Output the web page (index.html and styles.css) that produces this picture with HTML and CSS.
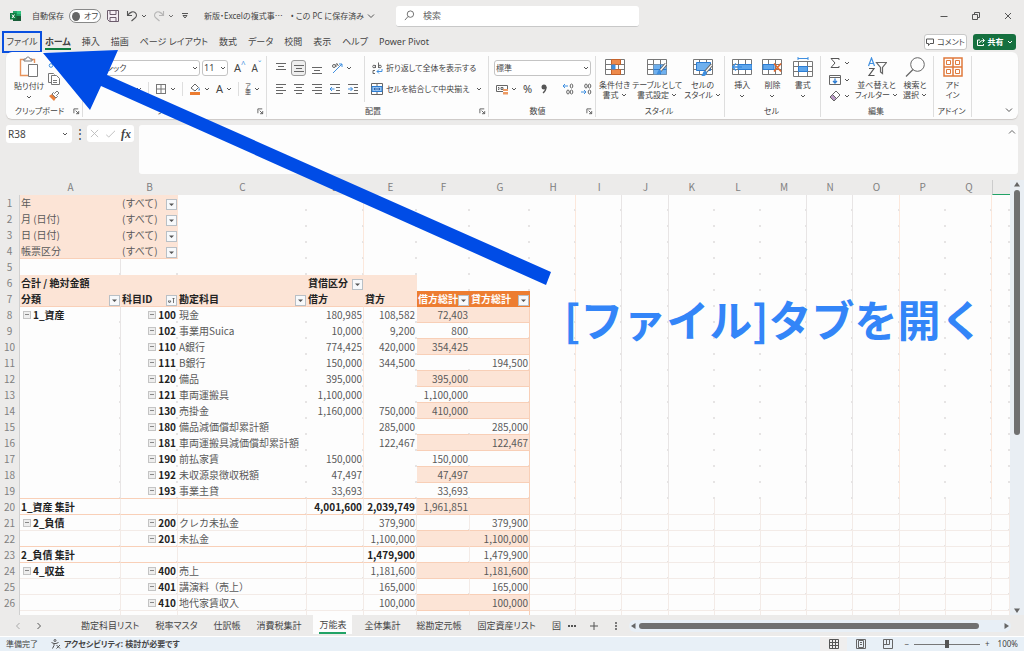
FILE: index.html
```html
<!DOCTYPE html>
<html lang="ja">
<head>
    <meta charset="UTF-8">
    <meta name="viewport" content="width=device-width, initial-scale=1.0">
    <title>新版・Excelの複式事</title>
    <link rel="stylesheet" href="styles.css">
</head>
<body>

    <svg class="sprite" aria-hidden="true">
        <symbol id="chev" viewBox="0 0 6 6"><path d="M1 2l2 2 2-2" fill="none" stroke="#555" stroke-width="1"/></symbol>
        <symbol id="launch" viewBox="0 0 8 8"><path d="M1 6V1h5M3 3l3.500 3.500M6.500 3.500v3h-3" fill="none" stroke="#555"/></symbol>
        <symbol id="al-left" viewBox="0 0 12 12"><path d="M1 1.500h10M1 4.500h7M1 7.500h10M1 10.500h7" stroke="#666"/></symbol>
        <symbol id="al-center" viewBox="0 0 12 12"><path d="M1 1.500h10M3 4.500h6M1 7.500h10M3 10.500h6" stroke="#666"/></symbol>
        <symbol id="al-right" viewBox="0 0 12 12"><path d="M1 1.500h10M4 4.500h7M1 7.500h10M4 10.500h7" stroke="#666"/></symbol>
        <symbol id="v-top" viewBox="0 0 12 12"><path d="M1 1.500h10M3 4.500h6M1 7.500h10" stroke="#666"/></symbol>
        <symbol id="v-mid" viewBox="0 0 12 12"><path d="M1 3.500h10M3 6.500h6M1 9.500h10" stroke="#666"/></symbol>
        <symbol id="v-bot" viewBox="0 0 12 12"><path d="M1 5.500h10M3 8.500h6M1 11.500h10" stroke="#666"/></symbol>
        <symbol id="grid" viewBox="0 0 20 20"><path d="M.5 2.500h19v15H.5zM.5 7.500h19M.5 12.500h19M6.500 2.500v15M13.500 2.500v15" fill="#fff" stroke="#777"/></symbol>
        <symbol id="brush" viewBox="0 0 12 12"><path d="M11 1L5 8" stroke="#666" stroke-width="3"/><path d="M11 1L5 8" stroke="#fff" stroke-width="1.300"/><path d="M1 11.500c2-1 1-4 3.500-4.500 2 0 2.500 2 1 3.500-1 1-3 1.300-4.500 1z" fill="#3f8fe0"/></symbol>
    </svg>

    <header class="titlebar">
        <div class="title-left">
            <svg class="logo" viewBox="0 0 12 12"><path d="M3 1h8v10H3z" fill="#21a366"/><path d="M7 1h4v3H7z" fill="#33c481"/><path d="M3 6h8v5H3z" fill="#185c37"/><path d="M0 3h6.500v6.500H0z" fill="#107c41"/><path d="M2 4.500l2.500 3.500M4.500 4.500L2 8" stroke="#fff"/></svg>
            <span class="autosave">自動保存</span>
            <button class="toggle" type="button" aria-label="自動保存"><i></i>オフ</button>
            <button class="ic save" type="button" aria-label="上書き保存"><svg viewBox="0 0 12 12"><path d="M.5 .5h11v11h-9l-2-2z" fill="#f4edf4" stroke="#6b5b6b"/><path d="M3 .5h6v4H3zM3 11.500v-4h6v4" fill="none" stroke="#6b5b6b"/></svg></button>
            <button class="ic undo" type="button" aria-label="元に戻す"><svg viewBox="0 0 12 12"><path d="M1.500 1v4.500H6M1.500 5.500C4 2 7 1 9 2.500s2 4 0 5.500L5.500 11" fill="none" stroke="#555" stroke-width="1.100"/></svg><svg class="chev"><use href="#chev"/></svg></button>
            <button class="ic redo" type="button" aria-label="やり直し"><svg viewBox="0 0 12 12"><path d="M10.500 1v4.500H6M10.500 5.500C8 2 5 1 3 2.500s-2 4 0 5.500L6.500 11" fill="none" stroke="#aaa" stroke-width="1.100"/></svg><svg class="chev"><use href="#chev"/></svg></button>
            <button class="ic more" type="button" aria-label="カスタマイズ"><svg class="chev" viewBox="0 0 6 6"><path d="M0 .5h6M1 2.500h4L3 5z" fill="none" stroke="#555"/></svg></button>
            <span class="doc">新版・Excelの複式事⋯</span>
            <span class="doc-state">• この PC に保存済み</span>
            <svg class="chev8" viewBox="0 0 8 8"><path d="M1 2.500l3 3 3-3" fill="none" stroke="#555"/></svg>
        </div>
        <label class="search">
            <svg viewBox="0 0 12 12"><circle cx="7" cy="4.500" r="3.500" fill="none" stroke="#666"/><path d="M4.500 7L1 11" stroke="#666"/></svg>
            <input type="text" placeholder="検索" aria-label="検索">
        </label>
        <div class="win">
            <button type="button" aria-label="最小化"><svg viewBox="0 0 10 10"><path d="M1.500 5.500h7" stroke="#555"/></svg></button>
            <button type="button" aria-label="元のサイズ"><svg viewBox="0 0 10 10"><path d="M1.500 3.500h5v5h-5zM3.500 3V1.500h5v5H7" fill="none" stroke="#555"/></svg></button>
            <button type="button" aria-label="閉じる"><svg viewBox="0 0 10 10"><path d="M2 2l6 6M8 2L2 8" stroke="#555"/></svg></button>
        </div>
    </header>

    <nav class="tabs">
        <button class="file" type="button">ファイル</button>
        <button class="active" type="button">ホーム</button>
        <button type="button">挿入</button>
        <button type="button">描画</button>
        <button type="button">ページ レイアウト</button>
        <button type="button">数式</button>
        <button type="button">データ</button>
        <button type="button">校閲</button>
        <button type="button">表示</button>
        <button type="button">ヘルプ</button>
        <button type="button">Power Pivot</button>
        <div class="tab-actions">
            <button class="comment" type="button"><svg viewBox="0 0 8 8"><path d="M.5 1h7v4.500H4L2.500 7.500V5.500h-2z" fill="none" stroke="#555"/></svg>コメント</button>
            <button class="share" type="button"><svg viewBox="0 0 8 8"><path d="M3 2H.5v5.500h6V6M2.500 5c.5-2 2-2.500 4.500-2.500M5.500 .5l2 2-2 2" fill="none" stroke="#fff"/></svg>共有<svg class="chev" viewBox="0 0 6 6"><path d="M1 2l2 2 2-2" fill="none" stroke="#fff"/></svg></button>
        </div>
    </nav>

    <section class="ribbon">
        <div class="group">
            <div class="body clip">
                <button class="big" type="button"><svg class="i22" viewBox="0 0 22 22"><path d="M6 3.500H2.500v16H10M13 3.500h3.500V7" fill="none" stroke="#e8935a" stroke-width="1.400"/><path d="M6 5V3h2c0-2.600 4-2.600 4 0h2v2z" fill="#fff" stroke="#777"/><path d="M10.500 8.500h9v12h-9z" fill="#fff" stroke="#777"/></svg><span>貼り付け</span><svg class="chev"><use href="#chev"/></svg></button>
                <div class="stack">
                    <button class="ic" type="button" aria-label="切り取り"><svg viewBox="0 0 12 12"><path d="M4 8L9 0M8 8L3 0" stroke="#777"/><circle cx="3" cy="9.500" r="1.800" fill="none" stroke="#3f8fe0"/><circle cx="9" cy="9.500" r="1.800" fill="none" stroke="#3f8fe0"/></svg></button>
                    <button class="ic" type="button" aria-label="コピー"><svg viewBox="0 0 12 12"><path d="M3 9.500H.5v-9h5l1 1" fill="none" stroke="#777"/><path d="M3.500 2.500h5l3 3v6h-8z" fill="#fff" stroke="#777"/><path d="M5 7.500h4M5 9.500h4" stroke="#777"/></svg></button>
                    <button class="ic" type="button" aria-label="書式のコピー"><svg viewBox="0 0 12 12"><path d="M1 6l5 5 2-3-4-4z" fill="#e8803c"/><path d="M4 4l4 4 1.500-1.500-1-1L11 3 9 1 6.500 3.500l-1-1z" fill="#fff" stroke="#777"/></svg></button>
                </div>
            </div>
            <div class="label"><span>クリップボード</span><svg><use href="#launch"/></svg></div>
        </div>

        <div class="group">
            <div class="body rows">
                <div class="row">
                    <select class="font-name" aria-label="フォント"><option>游ゴシック</option></select>
                    <select class="font-size" aria-label="フォント サイズ"><option>11</option></select>
                    <button class="letter" type="button">A<sup>^</sup></button>
                    <button class="letter small" type="button">A<sup>ˇ</sup></button>
                </div>
                <div class="row end">
                    <svg class="chev"><use href="#chev"/></svg>
                    <i class="sep"></i>
                    <button class="ic" type="button" aria-label="罫線"><svg viewBox="0 0 12 12"><path d="M1 1.500h10M1 10.500h10M1.500 1v10M10.500 1v10M6 1v10M1 6h10" stroke="#777"/></svg><svg class="chev"><use href="#chev"/></svg></button>
                    <i class="sep"></i>
                    <button class="ic" type="button" aria-label="塗りつぶしの色"><svg viewBox="0 0 12 12"><path d="M2 5l4-4 3.500 3.500L6 8z" fill="#fff" stroke="#666"/><path d="M10 4l1 3-1.500 1z" fill="#3f8fe0"/><path d="M1 9h10v3H1z" fill="#ed7d31"/></svg><svg class="chev"><use href="#chev"/></svg></button>
                    <button class="ic letter" type="button">A<svg class="chev"><use href="#chev"/></svg></button>
                    <i class="sep"></i>
                    <button class="ic ruby" type="button"><span>ア<br>亜</span><svg class="chev"><use href="#chev"/></svg></button>
                </div>
            </div>
            <div class="label"><span>フォント</span><svg><use href="#launch"/></svg></div>
        </div>

        <div class="group">
            <div class="body align">
                <div class="rows">
                    <div class="row">
                        <button class="ic" type="button" aria-label="上揃え"><svg><use href="#v-top"/></svg></button>
                        <button class="ic on" type="button" aria-label="上下中央揃え"><svg><use href="#v-mid"/></svg></button>
                        <button class="ic" type="button" aria-label="下揃え"><svg><use href="#v-bot"/></svg></button>
                        <button class="ic wide" type="button" aria-label="方向"><svg viewBox="0 0 12 12"><path d="M2 11L11 2M11 5V2H8" fill="none" stroke="#3f8fe0"/><circle cx="3" cy="4" r="1.500" fill="none" stroke="#666"/><path d="M5 2v3M5.500 1l2 3" stroke="#666"/></svg><svg class="chev"><use href="#chev"/></svg></button>
                    </div>
                    <div class="row">
                        <button class="ic" type="button" aria-label="左揃え"><svg><use href="#al-left"/></svg></button>
                        <button class="ic" type="button" aria-label="中央揃え"><svg><use href="#al-center"/></svg></button>
                        <button class="ic" type="button" aria-label="右揃え"><svg><use href="#al-right"/></svg></button>
                        <button class="ic" type="button" aria-label="インデントを減らす"><svg viewBox="0 0 12 12"><path d="M1 1.500h10M7 4.500h4M7 7.500h4M1 10.500h10" stroke="#666"/><path d="M5.500 6H1M3 4L1 6l2 2" fill="none" stroke="#3f8fe0"/></svg></button>
                        <button class="ic" type="button" aria-label="インデントを増やす"><svg viewBox="0 0 12 12"><path d="M1 1.500h10M7 4.500h4M7 7.500h4M1 10.500h10" stroke="#666"/><path d="M1 6h4.500M3.500 4l2 2-2 2" fill="none" stroke="#3f8fe0"/></svg></button>
                    </div>
                </div>
                <div class="rows wrap">
                    <button class="row" type="button"><svg class="i12" viewBox="0 0 12 12"><path d="M4.500 3v3M7.500 .5v5.500M4 8.500H2v3h2" fill="none" stroke="#666"/><circle cx="3" cy="4.500" r="1.300" fill="none" stroke="#666"/><circle cx="9" cy="4.500" r="1.300" fill="none" stroke="#666"/><path d="M11 7v2.500H6M8 7.500l-2 2 2 2" fill="none" stroke="#3f8fe0"/></svg>折り返して全体を表示する</button>
                    <button class="row" type="button"><svg class="i12" viewBox="0 0 12 12"><path d="M.5 .5h11v11H.5zM6 .5v3M6 8.500v3" fill="#fff" stroke="#666"/><path d="M1 3.500h10v5H1z" fill="#9cc8f3" stroke="#2b7cd3"/><path d="M3 6h6M4 4.800L3 6l1 1.200M8 4.800L9 6 8 7.200" fill="none" stroke="#2b5fa8"/></svg>セルを結合して中央揃え<svg class="chev"><use href="#chev"/></svg></button>
                </div>
            </div>
            <div class="label"><span>配置</span><svg><use href="#launch"/></svg></div>
        </div>

        <div class="group">
            <div class="body rows num">
                <select aria-label="表示形式"><option>標準</option></select>
                <div class="row spread">
                    <button class="ic" type="button" aria-label="通貨"><svg viewBox="0 0 12 12"><path d="M.5 2.500h11v6H.5z" fill="#fff" stroke="#666"/><path d="M2 4.500h1v2H2M5 4.500h2v2H5z" fill="none" stroke="#666"/><path d="M7 6h5v5.500H7z" fill="#ed9a63"/><path d="M7 8.500h5" stroke="#fff"/></svg><svg class="chev"><use href="#chev"/></svg></button>
                    <button class="ic pct" type="button">%</button>
                    <button class="ic" type="button" aria-label="桁区切り"><svg viewBox="0 0 12 12"><circle cx="6" cy="4" r="2.500" fill="#555"/><path d="M8 4c0 3-1 4.500-3 6" fill="none" stroke="#555" stroke-width="1.300"/></svg></button>
                    <i class="sep"></i>
                    <button class="ic" type="button" aria-label="小数点以下の桁数を増やす"><svg viewBox="0 0 12 12"><path d="M6 3H1M3 1L1 3l2 2" fill="none" stroke="#3f8fe0"/><ellipse cx="9.500" cy="3" rx="1.300" ry="2" fill="none" stroke="#666"/><ellipse cx="6" cy="9" rx="1.300" ry="2" fill="none" stroke="#666"/><ellipse cx="9.500" cy="9" rx="1.300" ry="2" fill="none" stroke="#666"/></svg></button>
                    <button class="ic" type="button" aria-label="小数点以下の桁数を減らす"><svg viewBox="0 0 12 12"><path d="M1 9h5M4 7l2 2-2 2" fill="none" stroke="#3f8fe0"/><ellipse cx="9.500" cy="3" rx="1.300" ry="2" fill="none" stroke="#666"/><ellipse cx="6" cy="3" rx="1.300" ry="2" fill="none" stroke="#666"/><ellipse cx="9.500" cy="9" rx="1.300" ry="2" fill="none" stroke="#666"/></svg></button>
                </div>
            </div>
            <div class="label"><span>数値</span><svg><use href="#launch"/></svg></div>
        </div>

        <div class="group">
            <div class="body bigs">
                <button class="big" type="button"><svg class="i20" viewBox="0 0 20 20"><use href="#grid"/><path d="M6.500 2.500h9v5h-9zM6.500 12.500h9v5h-9z" fill="#ed8a4c" stroke="#c5622a"/><path d="M6.500 7.500h4v5h-4z" fill="#3f8fe0"/></svg><span>条件付き<br>書式<svg class="chev"><use href="#chev"/></svg></span></button>
                <button class="big" type="button"><svg class="i20" viewBox="0 0 20 20"><use href="#grid"/><path d="M6.500 7.500h13v10h-13z" fill="#6fb0ee"/><path d="M6.500 12.500h13M13.500 7.500v10" stroke="#2b7cd3"/><use href="#brush" x="8" y="5" width="12" height="14"/></svg><span>テーブルとして<br>書式設定<svg class="chev"><use href="#chev"/></svg></span></button>
                <button class="big" type="button"><svg class="i20" viewBox="0 0 20 20"><use href="#grid"/><path d="M3.500 5.500h14v8h-14z" fill="#6fb0ee" stroke="#2b7cd3"/><use href="#brush" x="7" y="6" width="13" height="14"/></svg><span>セルの<br>スタイル<svg class="chev"><use href="#chev"/></svg></span></button>
            </div>
            <div class="label"><span>スタイル</span></div>
        </div>

        <div class="group">
            <div class="body bigs">
                <button class="big" type="button"><svg class="i20" viewBox="0 0 20 20"><use href="#grid"/><path d="M6 7.500h14v5H6z" fill="#5ea6ec" stroke="#2b7cd3"/><path d="M10 10H1M4 6.500L.5 10 4 13.500" fill="none" stroke="#3f8fe0" stroke-width="1.300"/></svg><span>挿入</span><svg class="chev"><use href="#chev"/></svg></button>
                <button class="big" type="button"><svg class="i20" viewBox="0 0 20 20"><use href="#grid"/><path d="M1 7.500h11v5H1z" fill="#5ea6ec" stroke="#2b7cd3"/><path d="M12 6.500l7 8M19 6.500l-7 8" stroke="#e0672a" stroke-width="1.500"/></svg><span>削除</span><svg class="chev"><use href="#chev"/></svg></button>
                <button class="big" type="button"><svg class="i20" viewBox="0 0 20 20"><path d="M.5 4.500h19v15H.5zM.5 9.500h19M.5 14.500h19M5.500 4.500v15M14.500 4.500v15" fill="#fff" stroke="#777"/><path d="M5.500 9.500h9v5h-9z" fill="#5ea6ec" stroke="#2b7cd3"/><path d="M5 1.500h10M5 0v3M15 0v3" stroke="#3f8fe0"/></svg><span>書式</span><svg class="chev"><use href="#chev"/></svg></button>
            </div>
            <div class="label"><span>セル</span></div>
        </div>

        <div class="group">
            <div class="body edit">
                <div class="stack">
                    <button class="ic" type="button" aria-label="合計"><svg viewBox="0 0 12 12"><path d="M10 3V1.500H2L6 6l-4 4.500h8V9" fill="none" stroke="#555"/></svg><svg class="chev"><use href="#chev"/></svg></button>
                    <button class="ic" type="button" aria-label="フィル"><svg viewBox="0 0 12 12"><path d="M.5 1.500h11v9H.5zM.5 3.500h11" fill="none" stroke="#666"/><path d="M6 4.500v4.500M4 7l2 2 2-2" fill="none" stroke="#2b7cd3" stroke-width="1.300"/></svg><svg class="chev"><use href="#chev"/></svg></button>
                    <button class="ic" type="button" aria-label="クリア"><svg viewBox="0 0 12 12"><path d="M1 7l6-6 4 4-6 6z" fill="#fff" stroke="#666"/><path d="M1 7l2.500-2.500 4 4L5 11z" fill="#b99ac4" stroke="#666"/></svg><svg class="chev"><use href="#chev"/></svg></button>
                </div>
                <button class="big" type="button"><svg class="i20" viewBox="0 0 20 20"><path d="M1.500 9L4.500 1l3 8M2.500 6.500h4" fill="none" stroke="#3f8fe0" stroke-width="1.200"/><path d="M2 11.500h5L2 18.500h5.500" fill="none" stroke="#555" stroke-width="1.200"/><path d="M9.500 5.500h10l-4 5v6l-2-1.500v-4.500z" fill="none" stroke="#666" stroke-width="1.200"/></svg><span>並べ替えと<br>フィルター<svg class="chev"><use href="#chev"/></svg></span></button>
                <button class="big" type="button"><svg class="i20" viewBox="0 0 20 20"><circle cx="12.500" cy="7.500" r="6.800" fill="none" stroke="#666"/><path d="M8 12.500L1 19.500" stroke="#666" stroke-width="1.200"/></svg><span>検索と<br>選択<svg class="chev"><use href="#chev"/></svg></span></button>
            </div>
            <div class="label"><span>編集</span></div>
        </div>

        <div class="group">
            <div class="body bigs">
                <button class="big" type="button"><svg class="i20" viewBox="0 0 20 20"><path d="M1 1h18v18H1zM10 1v18M1 10h18" fill="none" stroke="#e07a3c" stroke-width="1.500"/><path d="M3.500 3.500h4v4h-4zM12.500 3.500h4v4h-4zM3.500 12.500h4v4h-4zM12.500 12.500h4v4h-4z" fill="#fff" stroke="#e07a3c"/></svg><span>アド<br>イン</span></button>
            </div>
            <div class="label"><span>アドイン</span></div>
        </div>
        <button class="collapse" type="button" aria-label="リボンを折りたたむ"><svg class="chev8" viewBox="0 0 8 8"><path d="M1 2.500l3 3 3-3" fill="none" stroke="#555"/></svg></button>
    </section>

    <section class="formula">
        <select class="name-box" aria-label="名前ボックス"><option>R38</option></select>
        <span class="dots">⋮</span>
        <div class="fx">
            <svg viewBox="0 0 10 10"><path d="M1 1l8 8M9 1L1 9" stroke="#bbb"/></svg>
            <svg viewBox="0 0 10 10"><path d="M0 6l3 3 7-7" fill="none" stroke="#bbb"/></svg>
            <span>fx</span>
        </div>
        <div class="formula-box">
            <textarea aria-label="数式バー"></textarea>
            <svg class="chev8" viewBox="0 0 8 8"><path d="M1 5.500l3-3 3 3" fill="none" stroke="#666"/></svg>
        </div>
    </section>

    <main class="sheet">
        <div class="grid-area">
            <table class="cells">
                <colgroup>
                    <col class="c-no"><col class="c-a"><col class="c-b"><col class="c-c"><col class="c-d"><col class="c-e"><col class="c-f"><col class="c-g">
                    <col><col><col><col><col><col><col><col><col><col><col class="c-r">
                </colgroup>
                <thead><tr id="letters"></tr></thead>
                <tbody id="rows"></tbody>
            </table>
        </div>
        <div class="vscroll">
            <svg viewBox="0 0 8 8"><path d="M1 6.500L4 2l3 4.500z" fill="#666"/></svg>
            <div class="vtrack"><i></i></div>
            <svg viewBox="0 0 8 8"><path d="M1 1.500L4 6l3-4.500z" fill="#666"/></svg>
        </div>
    </main>

    <nav class="sheets">
        <button class="arrow" type="button" aria-label="前へ"><svg class="chev8" viewBox="0 0 8 8"><path d="M5.500 1l-3 3 3 3" fill="none" stroke="#aaa"/></svg></button>
        <button class="arrow" type="button" aria-label="次へ"><svg class="chev8" viewBox="0 0 8 8"><path d="M2.500 1l3 3-3 3" fill="none" stroke="#555"/></svg></button>
        <div class="names">
            <button type="button">勘定科目リスト</button>
            <button type="button">税率マスタ</button>
            <button type="button">仕訳帳</button>
            <button type="button">消費税集計</button>
            <button class="active" type="button"><span>万能表</span></button>
            <button type="button">全体集計</button>
            <button type="button">総勘定元帳</button>
            <button type="button">固定資産リスト</button>
            <button class="next" type="button">固</button>
        </div>
        <button class="tool" type="button" aria-label="その他のシート"><svg class="chev8" viewBox="0 0 8 8"><path d="M0 4h2M3 4h2M6 4h2" stroke="#555" stroke-width="2"/></svg></button>
        <button class="tool" type="button" aria-label="新しいシート"><svg class="chev8" viewBox="0 0 8 8"><path d="M4 0v8M0 4h8" stroke="#555"/></svg></button>
        <button class="tool" type="button" aria-label="幅の調整"><svg class="chev8" viewBox="0 0 8 8"><path d="M4 0v2M4 3v2M4 6v2" stroke="#555" stroke-width="1.500"/></svg></button>
        <div class="hscroll">
            <svg viewBox="0 0 8 8"><path d="M6.500 1L2 4l4.500 3z" fill="#666"/></svg>
            <div class="htrack"><i></i></div>
            <svg viewBox="0 0 8 8"><path d="M1.500 1L6 4 1.500 7z" fill="#666"/></svg>
        </div>
    </nav>

    <footer class="status">
        <span>準備完了</span>
        <svg class="acc" viewBox="0 0 10 10"><circle cx="4" cy="1.500" r="1" fill="none" stroke="#555"/><path d="M.5 3.500L3 4.500v2L1.500 9.500M7.500 3.500L5 4.500M3 4.500h2M5.500 6l3.500 3.500M9 6L5.500 9.500" fill="none" stroke="#555"/></svg>
        <b>アクセシビリティ: 検討が必要です</b>
        <div class="views">
            <button class="on" type="button" aria-label="標準"><svg viewBox="0 0 10 10"><path d="M.5 .5h9v9h-9zM.5 3.500h9M.5 6.500h9M3.500 .5v9M6.500 .5v9" fill="none" stroke="#555"/></svg></button>
            <button type="button" aria-label="ページ レイアウト"><svg viewBox="0 0 10 10"><path d="M.5 .5h9v9h-9zM2.500 1.500h5v7h-5zM4 3.500h2M4 5.500h2" fill="none" stroke="#666"/></svg></button>
            <button type="button" aria-label="改ページ プレビュー"><svg viewBox="0 0 10 10"><path d="M.5 .5h9v9h-9zM3.500 1v4.500h3V1M1 5.500h3" fill="none" stroke="#666"/></svg></button>
        </div>
        <div class="zoom">
            <span>−</span>
            <input type="range" min="0" max="100" value="50" aria-label="ズーム">
            <span>+</span>
            <output>100%</output>
        </div>
    </footer>

    <svg class="pointer" viewBox="0 0 560 290" width="560" height="290" aria-hidden="true">
        <path d="M43 53L118 50l-11 25 444 197-5 13L101 86l-11 24z" fill="#004ce6"/>
    </svg>
    <p class="callout">[ファイル]タブを開く</p>

    <script src="script.js"></script>
</body>
</html>
```

FILE: styles.css
```css
* {
    box-sizing: border-box;
}

body {
    display: flex;
    flex-direction: column;
    position: relative;
    height: 100vh;
    margin: 0;
    overflow: hidden;
    background-color: #ecebea;
    color: #444;
    font-family: "Noto Sans", "Noto Sans CJK JP", sans-serif;
    font-size: 8px;
    line-height: 10px;
    font-feature-settings: "palt";
}

button {
    padding: 0;
    border: none;
    background: none;
    color: inherit;
    font: inherit;
    font-feature-settings: inherit;
}

svg {
    flex: none;
    display: block;
}

.sprite {
    position: absolute;
    width: 0;
    height: 0;
}

.chev {
    width: 6px;
    height: 6px;
}

.chev8 {
    width: 8px;
    height: 8px;
}

select {
    appearance: none;
    border: 1px solid #c4c4c4;
    border-radius: 3px;
    background: #fff url("data:image/svg+xml,%3Csvg xmlns='http://www.w3.org/2000/svg' width='6' height='6'%3E%3Cpath d='M1 2l2 2 2-2' fill='none' stroke='%23555'/%3E%3C/svg%3E") no-repeat right 1px center;
    color: #444;
    font: inherit;
    padding: 0 1px;
    height: 16px;
}

/* title bar */
.titlebar {
    display: grid;
    grid-template-columns: 386fr 243fr 385fr;
    align-items: center;
    height: 32px;
    padding-left: 10px;
    flex: none;
}

.title-left {
    display: flex;
    align-items: center;
    white-space: nowrap;
}

.logo {
    width: 12px;
    height: 12px;
}

.autosave {
    margin: 0 5px 0 10px;
}

.toggle {
    display: flex;
    align-items: center;
    gap: 4px;
    width: 32px;
    height: 14px;
    padding: 0 2px;
    border: 1px solid #888;
    border-radius: 7px;
    background-color: #fff;
}

.toggle i {
    width: 9px;
    height: 9px;
    border-radius: 50%;
    background-color: #666;
}

.ic {
    display: flex;
    align-items: center;
    justify-content: center;
    gap: 3px;
}

.ic svg:not(.chev) {
    width: 12px;
    height: 12px;
}

.save {
    margin: 0 7px 0 6px;
}

.redo {
    margin-left: 6px;
    opacity: .8;
}

.more {
    margin: 0 16px 0 8px;
}

.more .chev {
    width: 6px;
    height: 6px;
}

.doc-state {
    margin: 0 3px 0 8px;
}

.search {
    display: flex;
    align-items: center;
    gap: 8px;
    height: 21px;
    padding: 0 8px;
    border-radius: 3px;
    border-bottom: 1px solid #c8c8c8;
    background-color: #fff;
}

.search svg {
    width: 11px;
    height: 11px;
}

.search input {
    flex: 1;
    border: none;
    padding: 0;
    font: inherit;
    font-size: 9px;
    outline: none;
}

.search input::placeholder {
    color: #666;
}

.win {
    display: flex;
    justify-content: flex-end;
    gap: 22px;
    padding-right: 11px;
}

.win svg {
    width: 10px;
    height: 10px;
}

/* ribbon tabs */
.tabs {
    display: flex;
    align-items: center;
    gap: 11px;
    height: 20px;
    padding: 0 8px 0 2px;
    flex: none;
    font-size: 9px;
    white-space: nowrap;
}

.tabs > button {
    height: 16px;
    padding-top: 2px;
    border-bottom: 2px solid transparent;
}

.tabs .file {
    width: 40px;
    height: 22px;
    margin-right: -8px;
    padding: 0;
    border: 2px solid #0a50e0;
}

.tabs .active {
    border-color: #107c41;
    font-weight: bold;
}

.tab-actions {
    display: flex;
    gap: 6px;
    margin-left: auto;
    font-size: 8px;
}

.tab-actions button {
    display: flex;
    align-items: center;
    justify-content: center;
    gap: 3px;
    width: 43px;
    height: 16px;
    border-radius: 3px;
}

.tab-actions svg:not(.chev) {
    width: 8px;
    height: 8px;
}

.comment {
    border: 1px solid #c8c8c8;
    background-color: #fff;
}

.tab-actions .share {
    background-color: #15703f;
    color: #fff;
    font-weight: bold;
}

/* ribbon */
.ribbon {
    display: grid;
    grid-template-columns: 77fr 184fr 222fr 107fr 129fr 96fr 113fr 38fr 46fr;
    height: 67px;
    margin: 0 6px;
    flex: none;
    border-radius: 6px;
    background-color: #fdfdfd;
    box-shadow: 0 1px 1px #ccc8c6;
    white-space: nowrap;
}

.group {
    display: flex;
    flex-direction: column;
    justify-content: space-between;
    min-width: 0;
    margin: 4px 0 2px;
    border-right: 1px solid #dedede;
}

.body {
    display: flex;
    height: 46px;
}

.label {
    display: flex;
    align-items: center;
    height: 12px;
    padding-right: 2px;
}

.label span {
    flex: 1;
    text-align: center;
}

.label svg {
    width: 7px;
    height: 7px;
}

.rows {
    display: flex;
    flex-direction: column;
    gap: 5px;
    padding-top: 4px;
}

.row {
    display: flex;
    align-items: center;
    gap: 6px;
    height: 16px;
}

.row.end {
    justify-content: flex-end;
    gap: 6px;
    padding-right: 6px;
}

.row.spread {
    justify-content: space-between;
    padding: 0 2px;
}

.sep {
    width: 1px;
    height: 14px;
    background-color: #dedede;
}

.clip {
    justify-content: space-between;
    padding: 0 22px 0 8px;
}

.stack {
    display: flex;
    flex-direction: column;
    justify-content: space-between;
}

.body .big {
    display: flex;
    flex-direction: column;
    align-items: center;
    gap: 3px;
    line-height: 10px;
}

.big span svg {
    display: inline-block;
    margin-left: 2px;
}

.i22 {
    width: 22px;
    height: 22px;
}

.i20 {
    width: 20px;
    height: 20px;
}

.i12 {
    width: 12px;
    height: 12px;
}

.font-name {
    width: 112px;
    margin-left: 5px;
}

.row .font-size {
    width: 26px;
    margin-left: -4px;
    font-size: 9px;
}

.letter {
    font-size: 11px;
}

.letter.small {
    font-size: 10px;
}

.letter sup {
    color: #3f8fe0;
    font-size: 8px;
    line-height: 0;
}

.ruby {
    font-size: 6px;
    line-height: 6px;
}

.align {
    padding-left: 6px;
}

.align .ic {
    width: 15px;
    height: 16px;
}

.align .row {
    gap: 3px;
}

.align .on {
    border: 1px solid #999;
    border-radius: 3px;
    background-color: #eee;
}

.align .wide {
    width: 28px;
}

.align .wrap {
    margin-left: 4px;
    padding-left: 6px;
    border-left: 1px solid #dedede;
}

.wrap .chev {
    margin-left: 3px;
}

.num {
    padding: 4px 4px 0 5px;
}

.pct {
    font-size: 11px;
}

.bigs {
    justify-content: space-around;
    padding: 1px 2px 0;
}

.edit {
    justify-content: space-between;
    padding: 1px 6px 0 8px;
}

.collapse {
    align-self: end;
    justify-self: end;
    padding: 5px;
}

/* formula bar */
.formula {
    display: flex;
    align-items: flex-start;
    height: 61px;
    padding: 6px;
    flex: none;
}

.formula .name-box {
    width: 66px;
    height: 18px;
    padding: 0 2px;
    border: none;
    background-position: right 4px center;
    font-size: 10px;
}

.dots {
    width: 15px;
    line-height: 18px;
    font-size: 12px;
    text-align: center;
}

.fx {
    display: flex;
    align-items: center;
    justify-content: space-between;
    width: 47px;
    height: 17px;
    padding: 0 3px;
    border-radius: 3px;
    background-color: #fff;
}

.fx svg {
    width: 9px;
    height: 9px;
}

.fx span {
    font-family: "Liberation Serif", serif;
    font-size: 12px;
    font-style: italic;
    font-weight: bold;
}

.formula-box {
    display: flex;
    flex: 1;
    height: 49px;
    margin-left: 5px;
    padding: 3px 2px;
    border-radius: 3px;
    background-color: #fdfdfd;
}

.formula-box textarea {
    flex: 1;
    border: none;
    background: none;
    resize: none;
}

/* sheet */
.sheet {
    display: flex;
    flex: 1;
    min-height: 0;
}

.grid-area {
    flex: 1;
    min-width: 0;
    overflow: hidden;
    background-color: #fdfdfd;
}

.cells {
    width: 100%;
    table-layout: fixed;
    border-collapse: separate;
    border-spacing: 0;
    color: #595959;
    font-family: "Noto Sans CJK JP", sans-serif;
    font-size: 10px;
    line-height: 15px;
    font-feature-settings: normal;
    white-space: nowrap;
}

.c-no { width: 20px; }
.c-a { width: 101px; }
.c-b { width: 57px; }
.c-c { width: 129px; }
.c-d { width: 57px; }
.c-e { width: 53px; }
.c-f { width: 53px; }
.c-g { width: 60px; }
.c-r { width: 18px; }

.cells th {
    height: 15px;
    padding: 0;
    background-color: #ecebea;
    color: #808080;
    font-weight: normal;
    line-height: 14px;
    vertical-align: top;
}

.cells thead th:last-child {
    border-left: 1px solid #ccc;
    border-bottom: 1px solid #21a366;
}

.cells tbody th {
    height: 16px;
    border-right: 1px solid #d0d0d0;
    line-height: 15px;
}

.cells td {
    height: 16px;
    padding: 0 1px;
    border-right: 1px solid transparent;
    border-bottom: 1px solid transparent;
    background-image: linear-gradient(#e6e4e4, #e6e4e4);
    background-size: 2px 2px;
    background-repeat: no-repeat;
    background-position: right bottom;
    background-origin: border-box;
}

.cells .line {
    border-right-color: #e8e5e5;
}

.cells .warm {
    border-right-color: #fce8dc;
}

.cells .ruled td {
    border-bottom-color: #f3ebe7;
    border-right-color: #f3ebe7;
}

.cells td.peach {
    border-color: transparent;
    background-color: #fce4d6;
    background-image: none;
}

.cells tr td.edge {
    border-bottom-color: #f9d0b8;
}

.cells .head,
.cells .strong {
    color: #222;
    font-weight: bold;
}

.cells .orange {
    background-color: #ed7d31;
    background-image: none;
    color: #fff;
    font-weight: bold;
}

.cells td.band {
    border-right-color: transparent;
    background-color: #fce4d6;
    background-image: none;
}

.cells tr td.band,
.cells tr td.plain {
    border-bottom-color: #f8cfb7;
}

.cells tr td.last {
    border-right-color: #f8cfb7;
}

.cell {
    display: flex;
    align-items: center;
    justify-content: space-between;
    height: 15px;
}

.cell.right {
    justify-content: flex-end;
}

.cell.left {
    justify-content: flex-start;
}

.filter {
    display: flex;
    align-items: center;
    justify-content: center;
    flex: none;
    align-self: flex-end;
    width: 11px;
    height: 11px;
    margin-right: -1px;
    border: 1px solid #b9c0c6;
    background-color: #f7f9fb;
}

.filter svg {
    width: 7px;
    height: 7px;
}

.minus {
    flex: none;
    width: 8px;
    height: 8px;
    margin: 0 2px;
    border: 1px solid #c4c4c4;
    background: linear-gradient(#888, #888) center / 4px 1px no-repeat #eee;
}

.vscroll {
    display: flex;
    flex-direction: column;
    align-items: center;
    width: 14px;
    background-color: #e9eef3;
}

.vscroll svg,
.hscroll svg {
    width: 8px;
    height: 8px;
}

.vtrack {
    flex: 1;
    padding: 2px 0;
}

.vtrack i {
    display: block;
    width: 6px;
    height: 59%;
    border-radius: 3px;
    background-color: #707070;
}

/* sheet tabs */
.sheets {
    display: flex;
    align-items: center;
    height: 22px;
    flex: none;
    border-bottom: 1px solid #fff;
    font-size: 9px;
    white-space: nowrap;
}

.arrow {
    width: 21px;
}

.arrow:first-child {
    margin-left: 7px;
}

.arrow svg,
.tool svg {
    margin: auto;
}

.names {
    display: flex;
    align-self: stretch;
    align-items: center;
    margin-left: 24px;
}

.names button {
    padding: 0 8px;
}

.names .active {
    align-self: flex-start;
    height: 19px;
    margin: 0 4px;
    padding: 0 6px;
    background-color: #fdfdfd;
}

.active span {
    border-bottom: 2px solid #21a366;
    padding-bottom: 1px;
}

.names .next {
    padding-right: 0;
}

.tool {
    width: 22px;
}

.hscroll {
    display: flex;
    flex: 1;
    align-items: center;
    height: 12px;
    margin: 0 13px 0 2px;
    border-radius: 6px;
    background-color: #e8eff6;
}

.htrack {
    flex: 1;
    padding: 0 2px;
}

.htrack i {
    display: block;
    width: 94%;
    height: 6px;
    border-radius: 3px;
    background-color: #707070;
}

/* status bar */
.status {
    display: flex;
    align-items: center;
    height: 14px;
    padding: 0 6px;
    flex: none;
    background-color: #e8f0f7;
}

.acc {
    width: 10px;
    height: 10px;
    margin: 0 3px 0 13px;
}

.views {
    display: flex;
    margin-left: auto;
}

.views button {
    width: 27px;
    height: 14px;
}

.views .on {
    background-color: #efeeee;
}

.views svg {
    width: 10px;
    height: 10px;
    margin: auto;
}

.zoom {
    display: flex;
    align-items: center;
    gap: 5px;
    padding-left: 3px;
}

.zoom output {
    margin-left: 3px;
}

.zoom input {
    appearance: none;
    width: 66px;
    height: 1px;
    margin: 0;
    background-color: #777;
}

.zoom input::-webkit-slider-thumb {
    appearance: none;
    width: 4px;
    height: 8px;
    background-color: #555;
}

/* tutorial overlay */
.pointer {
    position: absolute;
    left: 0;
    top: 0;
    pointer-events: none;
}

.callout {
    position: absolute;
    left: 564px;
    top: 288px;
    margin: 0;
    color: #3385f8;
    font-family: "Noto Sans CJK JP", sans-serif;
    font-size: 43px;
    font-weight: bold;
    line-height: 60px;
    font-feature-settings: normal;
    white-space: nowrap;
}
```

FILE: script.js
```js
const letters = ['', 'A', 'B', 'C', 'D', 'E', 'F', 'G', 'H', 'I', 'J', 'K', 'L', 'M', 'N', 'O', 'P', 'Q', ''];

// A, B, C, D, E, F, G
const data = [
    ['年', '(すべて)'],
    ['月 (日付)', '(すべて)'],
    ['日 (日付)', '(すべて)'],
    ['帳票区分', '(すべて)'],
    [],
    ['合計 / 絶対金額', '', '', '貸借区分'],
    ['分類', '科目ID', '勘定科目', '借方', '貸方', '借方総計', '貸方総計'],
    ['1_資産', '100', '現金', '180,985', '108,582', '72,403'],
    ['', '102', '事業用Suica', '10,000', '9,200', '800'],
    ['', '110', 'A銀行', '774,425', '420,000', '354,425'],
    ['', '111', 'B銀行', '150,000', '344,500', '', '194,500'],
    ['', '120', '備品', '395,000', '', '395,000'],
    ['', '121', '車両運搬具', '1,100,000', '', '1,100,000'],
    ['', '130', '売掛金', '1,160,000', '750,000', '410,000'],
    ['', '180', '備品減価償却累計額', '', '285,000', '', '285,000'],
    ['', '181', '車両運搬具減価償却累計額', '', '122,467', '', '122,467'],
    ['', '190', '前払家賃', '150,000', '', '150,000'],
    ['', '192', '未収源泉徴収税額', '47,497', '', '47,497'],
    ['', '193', '事業主貸', '33,693', '', '33,693'],
    ['1_資産 集計', '', '', '4,001,600', '2,039,749', '1,961,851'],
    ['2_負債', '200', 'クレカ未払金', '', '379,900', '', '379,900'],
    ['', '201', '未払金', '', '1,100,000', '', '1,100,000'],
    ['2_負債 集計', '', '', '', '1,479,900', '', '1,479,900'],
    ['4_収益', '400', '売上', '', '1,181,600', '', '1,181,600'],
    ['', '401', '講演料（売上）', '', '165,000', '', '165,000'],
    ['', '410', '地代家賃収入', '', '100,000', '', '100,000'],
    []
];

const filter = '<button class="filter" type="button" aria-label="フィルター"><svg viewBox="0 0 7 7"><path d="M1 2.500h5L3.500 5z" fill="#555"/></svg></button>';
const sort = '<button class="filter" type="button" aria-label="並べ替え"><svg viewBox="0 0 7 7"><path d="M0 4h3L1.500 6zM5.500 6V1M4.500 2l1-1 1 1" fill="none" stroke="#555" stroke-width=".8"/></svg></button>';
const minus = '<i class="minus"></i>';

// gridline colour class by column
const lines = { 0: 'line', 3: 'warm', 7: 'warm', 8: 'line', 9: 'line', 12: 'line', 13: 'line', 14: 'warm', 16: 'warm' };

function cell(no, col, text) {
    const classes = [];
    let side = 'left';
    let before = '';
    let after = '';
    const total = no === 20 || no === 23;

    if (lines[col]) classes.push(lines[col]);
    if (no <= 4 && col <= 1) classes.push('peach');
    if (no === 4 && col <= 1) classes.push('edge');
    if ((no === 6 || no === 7) && col <= 4) classes.push('peach', 'head');
    if (no === 7 && col <= 4) classes.push('edge');
    if (no === 7 && (col === 5 || col === 6)) classes.push('orange');
    if (no >= 8 && (col === 5 || col === 6)) {
        classes.push(no % 2 ? 'plain' : 'band');
        if (col === 6) classes.push('last');
    }
    if (no >= 8 && (col <= 1 || (total && col <= 4))) classes.push('strong');
    if ((total || no === 19 || no === 22) && col <= 4) classes.push('edge');

    if ((no <= 4 && col === 1) || (no === 6 && col === 3)) after = filter;
    if (no === 7 && [0, 2, 5, 6].includes(col)) after = filter;
    if (no === 7 && col === 1) after = sort;
    if (after) side = '';
    if (no >= 8 && (col === 1 || col >= 3)) side = 'right';
    if (no >= 8 && text && !total && col <= 1) before = minus;

    const body = text || after ? `<div class="cell ${side}">${before}<span>${text || ''}</span>${after}</div>` : '';
    return `<td class="${classes.join(' ')}">${body}</td>`;
}

document.getElementById('letters').innerHTML = letters.map(l => `<th>${l}</th>`).join('');

document.getElementById('rows').innerHTML = data.map((row, i) => {
    const no = i + 1;
    let tds = '';
    for (let col = 0; col < 18; col++) {
        tds += cell(no, col, row[col]);
    }
    // the last row only peeks out above the sheet tabs
    return `<tr class="${no >= 20 ? 'ruled' : ''}"><th>${no <= 26 ? no : ''}</th>${tds}</tr>`;
}).join('');
```
